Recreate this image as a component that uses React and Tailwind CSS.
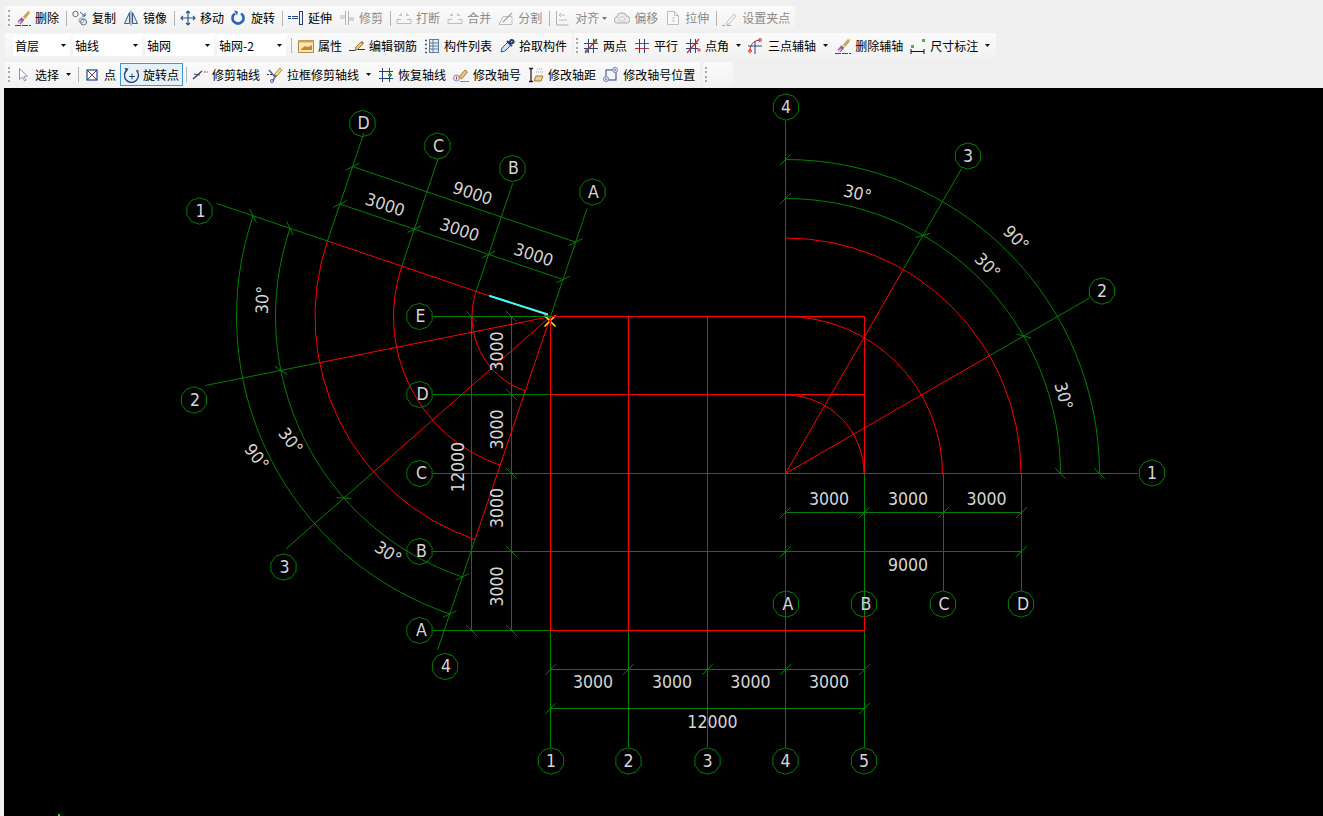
import React from "react";

const S = ({ children }) => (
  <svg width="16" height="16" viewBox="0 0 16 16" fill="none" className="shrink-0">
    {children}
  </svg>
);

// toolbar icons, drawn by hand
const BrushIcon = () => (
  <S>
    <path d="M0 15.500h16" stroke="#3b4a6b" strokeDasharray="6 1" />
    <path d="M9 8l5-6" stroke="#c9a94f" strokeWidth="3" />
    <path d="M14 2l1-1" stroke="#e8d9a0" strokeWidth="2" />
    <path d="M8 8.500l-4 4.500" stroke="#a05a9c" strokeWidth="4" />
    <path d="M3 14l3-3" stroke="#e9c6dd" strokeWidth="1.500" />
  </S>
);
const CopyIcon = () => (
  <S>
    <circle cx="3.500" cy="4" r="2.700" stroke="#5c6a80" />
    <circle cx="11.500" cy="12" r="3" stroke="#5c6a80" />
    <circle cx="9.500" cy="10.500" r="2.500" stroke="#8a97a8" />
    <path d="M8 2l5 4M13 3v3h-3" stroke="#2f5e9e" />
  </S>
);
const MirrorIcon = () => (
  <S>
    <path d="M6.500 2.500v11h-5zM9.500 2.500v11h5z" stroke="#3a5a9a" fill="#e4ebf6" />
    <path d="M8 .5v15" stroke="#6b7d99" />
  </S>
);
const MoveIcon = () => (
  <S>
    <path d="M8 1v14M1 8h14M6 3l2-2 2 2M6 13l2 2 2-2M3 6L1 8l2 2M13 6l2 2-2 2" stroke="#2f5a8f" strokeWidth="1.200" />
  </S>
);
const RotateIcon = () => (
  <S>
    <path d="M4 3.500a5.500 5.500 0 1 0 6 0" stroke="#2c62b8" strokeWidth="2.600" />
    <path d="M3 .5l4 1-1 4z" fill="#2c62b8" />
  </S>
);
const ExtendIcon = () => (
  <S>
    <rect x="11.500" y="1.500" width="3" height="13" stroke="#24407a" />
    <path d="M0 6.500h3M0 8.500h3M4 6.500h6M4 8.500h6" stroke="#24407a" />
  </S>
);
const TrimGrayIcon = () => (
  <S>
    <path d="M6.500 1v14M9.500 1v14M1 8h5M10 8h5M1 6h5M10 10h5" stroke="#b4b4b4" />
  </S>
);
const BreakIcon = () => (
  <S>
    <path d="M1 13.500h14M1 9.500h4M11 9.500h4M1 9.500v4M15 9.500v4" stroke="#bdbdbd" />
    <path d="M3 5.500h3M10 5.500h3M5 3v3M11 3v3" stroke="#bdbdbd" />
  </S>
);
const SplitIcon = () => (
  <S>
    <path d="M1 14.500h13M1 14.500l4-8h9v8" stroke="#bdbdbd" />
    <path d="M5 12L14 3" stroke="#a8a8a8" strokeWidth="1.500" />
  </S>
);
const AlignIcon = () => (
  <S>
    <path d="M1.500 1v14h12" stroke="#b0b0b0" />
    <path d="M4 5h6M4 5l2-2M4 5l2 2M4 10h8" stroke="#c0c0c0" />
  </S>
);
const OffsetIcon = () => (
  <S>
    <path d="M4 13a3 3 0 0 1-1-6 5 5 0 0 1 9.500-1A3.500 3.500 0 0 1 12 13z" stroke="#c0c0c0" strokeWidth="1.400" fill="#ededed" />
    <path d="M5.500 11a2 2 0 0 1 0-3 3 3 0 0 1 5 0 2 2 0 0 1 0 3z" stroke="#c8c8c8" />
  </S>
);
const StretchIcon = () => (
  <S>
    <path d="M2.500 1.500h7l4 4v9h-11z" stroke="#bdbdbd" fill="#f8f8f8" />
    <path d="M9.500 1.500v4h4M7 8h3M7 11h3" stroke="#bdbdbd" />
  </S>
);
const GripSetIcon = () => (
  <S>
    <path d="M0 15.500h3M5 15.500h4" stroke="#a8a8a8" />
    <path d="M5 12l7-8 2 2-7 8-3 1z" stroke="#c4c4c4" fill="#f4f4f4" />
  </S>
);
const AttrIcon = () => (
  <S>
    <path d="M.5 2.500h15v12H.5z" stroke="#b08a48" fill="#fbe8b8" />
    <path d="M.5 2.500h15v2H.5z" fill="#d9a550" />
    <path d="M3 11l4-3 3 1 4-2v5H3z" fill="#c08a3a" />
  </S>
);
const RebarIcon = () => (
  <S>
    <path d="M0 12.500h5l3-1h8" stroke="#333" />
    <path d="M6 10l6-6 2 2-6 6z" stroke="#a67c3a" fill="#e7c77c" />
    <path d="M12 4l1-1 2 2-1 1z" fill="#d9534f" />
  </S>
);
const ListIcon = () => (
  <S>
    <path d="M1 2.500h2M1 6.500h2M1 10.500h2M1 14.500h2" stroke="#3d5a80" strokeWidth="1.600" />
    <rect x="5.500" y="1.500" width="9" height="13" stroke="#5c7ba3" fill="#e8eef6" />
    <path d="M5.500 5h9M5.500 8h9M5.500 11h9M9 1.500v13" stroke="#5c7ba3" />
  </S>
);
const PickIcon = () => (
  <S>
    <path d="M2 14l1-4 6-6 3 3-6 6z" stroke="#2a5ea8" fill="#d4e4f8" />
    <path d="M8 3l5 5M10 5l2-3a2 2 0 0 1 2.500 2.500L11 6" stroke="#1f3f7a" strokeWidth="2" />
  </S>
);
const TwoPointIcon = () => (
  <S>
    <path d="M1 5.500h14M1 10.500h14M5.500 1v14M10.500 1v14" stroke="#2d4585" />
    <path d="M2 15L14 1" stroke="#d02a28" strokeWidth="1.200" />
    <circle cx="3.500" cy="13" r="1.700" fill="#4f8a34" />
    <circle cx="12.500" cy="3" r="1.700" fill="#4f8a34" />
  </S>
);
const ParallelIcon = () => (
  <S>
    <path d="M1 5.500h14M1 10.500h14" stroke="#c8322f" />
    <path d="M5.500 1v14M10.500 1v14" stroke="#2d4585" />
  </S>
);
const AngleIcon = () => (
  <S>
    <path d="M1 5.500h12M1 10.500h12M5.500 1v14M10.500 1v14" stroke="#2d4585" />
    <path d="M2 15L14 1" stroke="#d02a28" strokeWidth="1.200" />
    <circle cx="14" cy="12" r="1.200" stroke="#c8322f" />
  </S>
);
const ThreePointIcon = () => (
  <S>
    <path d="M2 13a10 10 0 0 1 10-11" stroke="#c8322f" />
    <path d="M0 8h14M7 3v13" stroke="#2d4585" />
    <circle cx="2" cy="13" r="1.400" stroke="#c8322f" />
    <circle cx="12" cy="2" r="1.400" stroke="#c8322f" />
  </S>
);
const DimIcon = () => (
  <S>
    <path d="M1 11v5M14 11v5M1 13.500h13" stroke="#111" />
    <rect x="1" y="7" width="3" height="3" fill="#4db34d" />
    <rect x="12" y="1" width="3" height="3" fill="#4db34d" />
  </S>
);
const SelectIcon = () => (
  <S>
    <path d="M4.500 1.500v11l3-2.500 2 4 1.500-.8-2-4h3.500z" stroke="#8796b4" fill="#fff" />
  </S>
);
const PointIcon = () => (
  <S>
    <rect x="3" y="3" width="10" height="10" stroke="#27407e" strokeWidth="1.200" fill="#fff" />
    <path d="M3 3l10 10M13 3L3 13" stroke="#27407e" />
    <rect x="7" y="7" width="2" height="2" fill="#e02020" />
  </S>
);
const RotatePointIcon = () => (
  <S>
    <path d="M12.500 3.500A7 7 0 1 1 3 3" stroke="#27407e" strokeWidth="1.400" />
    <path d="M.5 1l4 .5L2.500 5z" fill="#27407e" />
    <path d="M5 9.500h6M8 6.500v6" stroke="#27407e" />
    <circle cx="13.500" cy="4" r="1.300" fill="#d9534f" />
  </S>
);
const TrimAxisIcon = () => (
  <S>
    <path d="M1 12L10 4" stroke="#27407e" strokeWidth="1.400" />
    <path d="M2 7l6 1" stroke="#444" />
    <path d="M12 5h4" stroke="#c8322f" strokeDasharray="2 1" />
  </S>
);
const BoxTrimIcon = () => (
  <S>
    <path d="M7 8l6-7 2 2-6 7z" stroke="#b08a3a" fill="#f2dc8e" />
    <path d="M2 3l6 7M9 8l-3 6" stroke="#4467b0" strokeWidth="1.500" />
    <circle cx="5" cy="14" r="1.500" stroke="#4467b0" />
    <path d="M0 7.500h6" stroke="#333" strokeDasharray="2 1" />
  </S>
);
const RestoreIcon = () => (
  <S>
    <path d="M1 4.500h14M1 11.500h14M4.500 1v14M11.500 1v14" stroke="#27407e" />
    <path d="M10 8h4M12 6v4" stroke="#2e9e3f" strokeWidth="2" />
  </S>
);
const EditNoIcon = () => (
  <S>
    <circle cx="3.500" cy="11" r="3" stroke="#6d8fc7" fill="#e2ebf8" />
    <path d="M3.500 9.500v3" stroke="#c8322f" />
    <path d="M6 10l6-7 2.500 2-6 7z" stroke="#a67c3a" fill="#e7c77c" />
    <path d="M7 14.500h9" stroke="#6d8fc7" />
  </S>
);
const EditDistIcon = () => (
  <S>
    <path d="M1 1.500h4M1 14.500h4M3 1.500v13" stroke="#222" strokeWidth="1.300" />
    <path d="M6 14l2-5h7l-2 5z" stroke="#a67c3a" fill="#ecd28a" />
    <path d="M9 2h6M8 5h7" stroke="#999" strokeDasharray="1 1" />
  </S>
);
const EditPosIcon = () => (
  <S>
    <rect x="3" y="3" width="10" height="10" stroke="#27407e" />
    <circle cx="12" cy="3" r="2.500" stroke="#5f8ed1" fill="#e2ebf8" />
    <circle cx="3" cy="12" r="2.500" stroke="#5f8ed1" fill="#e2ebf8" />
    <path d="M3 11v2" stroke="#c8322f" />
    <path d="M12 2v2" stroke="#c8322f" />
  </S>
);

const GripDots = () => (
  <div className="flex h-[16px] w-[3px] flex-col justify-between">
    {[0, 1, 2, 3].map((i) => (
      <div key={i} className="h-[2px] w-[2px] bg-[#a9a9a9]" />
    ))}
  </div>
);

const Grip = () => (
  <div className="-mr-[3px]">
    <GripDots />
  </div>
);

const Sep = () => <div className="-mr-[2px] h-[15px] w-px shrink-0 bg-[#b4b4b4]" />;

const Caret = ({ gray }) => (
  <svg width="5" height="3" viewBox="0 0 5 3" className="shrink-0">
    <path d="M0 0h5L2.500 3z" fill={gray ? "#777" : "#111"} />
  </svg>
);

const Btn = ({ icon, label, gray }) => (
  <div className={`flex shrink-0 items-center gap-[4px] ${gray ? "text-[#8b8b8b]" : "text-black"}`}>
    {icon}
    <span>{label}</span>
  </div>
);

const Combo = ({ label, w }) => (
  <div className={`flex h-[21px] items-center justify-between bg-white pl-[2px] pr-[4px] ${w}`}>
    <span>{label}</span>
    <Caret />
  </div>
);

const barClass =
  "flex items-center gap-[7px] rounded-[2px] bg-gradient-to-b from-[#fbfbfb] to-[#f2f2f2]";

const Toolbar = () => (
  <div className="flex h-[88px] flex-col pl-[5px] pt-[6px] font-['Noto_Sans_CJK_SC','Liberation_Sans',sans-serif] text-[12px] leading-none">
    {/* row 1 */}
    <div className="flex h-[24px]">
      <div className={`${barClass} pl-[3px] pr-[5px]`}>
        <Grip />
        <Btn icon={<BrushIcon />} label="删除" />
        <Sep />
        <Btn icon={<CopyIcon />} label="复制" />
        <Btn icon={<MirrorIcon />} label="镜像" />
        <Sep />
        <Btn icon={<MoveIcon />} label="移动" />
        <Btn icon={<RotateIcon />} label="旋转" />
        <Sep />
        <Btn icon={<ExtendIcon />} label="延伸" />
        <Btn icon={<TrimGrayIcon />} label="修剪" gray />
        <Sep />
        <Btn icon={<BreakIcon />} label="打断" gray />
        <Btn icon={<BreakIcon />} label="合并" gray />
        <Btn icon={<SplitIcon />} label="分割" gray />
        <Sep />
        <Btn icon={<AlignIcon />} label="对齐" gray />
        <div className="-ml-[4px]">
          <Caret gray />
        </div>
        <Btn icon={<OffsetIcon />} label="偏移" gray />
        <Btn icon={<StretchIcon />} label="拉伸" gray />
        <Sep />
        <Btn icon={<GripSetIcon />} label="设置夹点" gray />
      </div>
    </div>

    {/* row 2 */}
    <div className="mt-[3px] flex h-[25px]">
      <div className={`${barClass} pl-[8px] pr-[5px]`}>
        <div className="flex gap-[3px]">
          <Combo label="首层" w="w-[57px]" />
          <Combo label="轴线" w="w-[69px]" />
          <Combo label="轴网" w="w-[69px]" />
          <Combo label="轴网-2" w="w-[69px]" />
        </div>
        <div className="-ml-[2px]">
          <Sep />
        </div>
        <Btn icon={<AttrIcon />} label="属性" />
        <Btn icon={<RebarIcon />} label="编辑钢筋" />
        <Btn icon={<ListIcon />} label="构件列表" />
        <Btn icon={<PickIcon />} label="拾取构件" />
      </div>
      <div className={`${barClass} ml-[2px] pl-[2px] pr-[6px]`}>
        <Grip />
        <Btn icon={<TwoPointIcon />} label="两点" />
        <Btn icon={<ParallelIcon />} label="平行" />
        <Btn icon={<AngleIcon />} label="点角" />
        <Caret />
        <Btn icon={<ThreePointIcon />} label="三点辅轴" />
        <Caret />
        <Btn icon={<BrushIcon />} label="删除辅轴" />
        <Btn icon={<DimIcon />} label="尺寸标注" />
        <Caret />
      </div>
    </div>

    {/* row 3 */}
    <div className="mt-[4px] flex h-[25px]">
      <div className={`${barClass} pl-[3px] pr-[5px]`}>
        <Grip />
        <Btn icon={<SelectIcon />} label="选择" />
        <Caret />
        <Sep />
        <Btn icon={<PointIcon />} label="点" />
        <div className="-ml-[3px] flex h-[23px] items-center gap-[3px] border border-[#3a97dd] bg-[#e6f2fb] px-[3px]">
          <RotatePointIcon />
          <span>旋转点</span>
        </div>
        <div className="-ml-[4px] -mr-[1px]">
          <Sep />
        </div>
        <Btn icon={<TrimAxisIcon />} label="修剪轴线" />
        <Btn icon={<BoxTrimIcon />} label="拉框修剪轴线" />
        <Caret />
        <Btn icon={<RestoreIcon />} label="恢复轴线" />
        <Btn icon={<EditNoIcon />} label="修改轴号" />
        <Btn icon={<EditDistIcon />} label="修改轴距" />
        <Btn icon={<EditPosIcon />} label="修改轴号位置" />
      </div>
      <div className={`${barClass} ml-[3px] w-[30px] pl-[2px]`}>
        <GripDots />
      </div>
    </div>
  </div>
);

// ---- drawing geometry, in screenshot pixels ----
const GREEN = "#008000";
const RED = "#ff0000";
const TEXT = "#d6d6d6";
const U = 78.5;
const RADS = [U, 157, 235.5];
const DIMS = [275, 314];
const AXIS_END = 352;

const rad = (d) => (d * Math.PI) / 180;

const L = ({ a, b, c = GREEN }) => <line x1={a[0]} y1={a[1]} x2={b[0]} y2={b[1]} stroke={c} strokeWidth="1" />;

// tick mark: 45 degrees off the line it sits on
const Tick = ({ p, deg, len = 7.5 }) => {
  const t = rad(deg + 45);
  const d = [Math.cos(t) * len, Math.sin(t) * len];
  return <L a={[p[0] - d[0], p[1] - d[1]]} b={[p[0] + d[0], p[1] + d[1]]} />;
};

const Txt = ({ x, y, r = 0, children }) => (
  <text
    x={x}
    y={y}
    fill={TEXT}
    fontFamily="'DejaVu Sans', sans-serif"
    fontSize="17"
    textAnchor="middle"
    dominantBaseline="central"
    transform={`rotate(${r} ${x} ${y}) translate(${x} ${y}) scale(0.93 1) translate(${-x} ${-y})`}
  >
    {children}
  </text>
);

const Bubble = ({ x, y, label, tx = 0, ty = 0 }) => {
  const pts = Array.from({ length: 10 }, (_, i) => {
    const t = rad(i * 36 + 18);
    return `${(x + Math.cos(t) * 13.2).toFixed(1)},${(y + Math.sin(t) * 13.2).toFixed(1)}`;
  }).join(" ");
  return (
    <g>
      <polygon points={pts} stroke={GREEN} fill="none" />
      <Txt x={x + tx} y={y + ty}>
        {label}
      </Txt>
    </g>
  );
};

const RightPolar = () => {
  const c = [785.5, 473.5];
  const pt = (r, a) => [c[0] + r * Math.cos(rad(a)), c[1] - r * Math.sin(rad(a))];
  const arc = (r) => `M${c[0] + r} ${c[1]}A${r} ${r} 0 0 0 ${c[0]} ${c[1] - r}`;
  return (
    <g>
      {[0, 30, 60, 90].map((a) => (
        <g key={a}>
          <L a={c} b={pt(235.5, a)} c={RED} />
          <L a={pt(235.5, a)} b={pt(AXIS_END, a)} />
          <Tick p={pt(275, a)} deg={-a} />
        </g>
      ))}
      {RADS.map((r) => (
        <path key={r} d={arc(r)} stroke={RED} fill="none" />
      ))}
      {DIMS.map((r) => (
        <path key={r} d={arc(r)} stroke={GREEN} fill="none" />
      ))}
      <Tick p={pt(314, 0)} deg={0} />
      <Tick p={pt(314, 90)} deg={-90} />
    </g>
  );
};

const LeftPolar = () => {
  const c = [550.5, 316.5];
  const rot = 18.7;
  // angle measured from -x, downward positive; axis 1..4
  const angs = [-rot, 30 - rot, 60 - rot, 90 - rot];
  const pt = (r, a) => [c[0] - r * Math.cos(rad(a)), c[1] + r * Math.sin(rad(a))];
  const arc = (r) => {
    const s = pt(r, angs[0]);
    const e = pt(r, angs[3]);
    return `M${s[0]} ${s[1]}A${r} ${r} 0 0 0 ${e[0]} ${e[1]}`;
  };
  const v = [Math.sin(rad(rot)), -Math.cos(rad(rot))];
  const along = (s, t) => {
    const o = pt(s, angs[0]);
    return [o[0] + v[0] * t, o[1] + v[1] * t];
  };
  const axisOff = [0, U, 157, 235.5];
  return (
    <g>
      {angs.map((a) => (
        <g key={a}>
          <L a={c} b={pt(235.5, a)} c={RED} />
          <L a={pt(235.5, a)} b={pt(AXIS_END, a)} />
          <Tick p={pt(275, a)} deg={180 - a} />
        </g>
      ))}
      {RADS.map((r) => (
        <path key={r} d={arc(r)} stroke={RED} fill="none" />
      ))}
      {DIMS.map((r) => (
        <path key={r} d={arc(r)} stroke={GREEN} fill="none" />
      ))}
      <Tick p={pt(314, angs[0])} deg={180 - angs[0]} />
      <Tick p={pt(314, angs[3])} deg={180 - angs[3]} />
      {axisOff.map((s) => (
        <g key={s}>
          <L a={along(s, 0)} b={along(s, 114)} />
          <Tick p={along(s, 39)} deg={108.7} />
        </g>
      ))}
      <L a={along(235.5, 39)} b={along(0, 39)} />
      <L a={along(235.5, 78.5)} b={along(0, 78.5)} />
      <Tick p={along(235.5, 78.5)} deg={108.7} />
      <Tick p={along(0, 78.5)} deg={108.7} />
      <line x1="489.3" y1="295.7" x2="548" y2="314.5" stroke="#40ffff" strokeWidth="2" />
      <path d="M544.500 315.500l11 11M555.500 315.500l-11 11" stroke="#ffee00" strokeWidth="1.500" />
      <circle cx="550" cy="321" r="1.500" fill={RED} />
    </g>
  );
};

const Grid = () => {
  const xs = [550.5, 628.5, 707.5, 785.5, 864.5];
  const ys = [316.5, 394.5, 473.5, 551.5, 630.5];
  return (
    <g shapeRendering="crispEdges">
      {/* horizontal axis lines, green stub then red */}
      {ys.map((y) => (
        <L key={y} a={[433, y]} b={[550.5, y]} />
      ))}
      <L a={[550.5, 316.5]} b={[864.5, 316.5]} c={RED} />
      <L a={[550.5, 394.5]} b={[864.5, 394.5]} c={RED} />
      <L a={[550.5, 473.5]} b={[1021.5, 473.5]} c={RED} />
      <L a={[1021.5, 473.5]} b={[1138, 473.5]} />
      <L a={[550.5, 551.5]} b={[785.5, 551.5]} c={RED} />
      <L a={[785.5, 551.5]} b={[1021.5, 551.5]} />
      <L a={[550.5, 630.5]} b={[864.5, 630.5]} c={RED} />
      {/* vertical axis lines */}
      {xs.map((x) => (
        <L key={x} a={[x, 630.5]} b={[x, 747]} />
      ))}
      {xs.slice(0, 3).map((x) => (
        <L key={x} a={[x, 316.5]} b={[x, 630.5]} c={RED} />
      ))}
      <L a={[864.5, 316.5]} b={[864.5, 473.5]} c={RED} />
      <L a={[785.5, 473.5]} b={[785.5, 616]} />
      <L a={[785.5, 616]} b={[785.5, 630.5]} c={RED} />
      <L a={[864.5, 473.5]} b={[864.5, 616]} />
      <L a={[864.5, 616]} b={[864.5, 630.5]} c={RED} />
      <L a={[943.5, 473.5]} b={[943.5, 591]} />
      <L a={[1021.5, 473.5]} b={[1021.5, 591]} />
      {/* dimension lines */}
      <L a={[471.5, 316.5]} b={[471.5, 630.5]} />
      <L a={[511.5, 316.5]} b={[511.5, 630.5]} />
      <L a={[550.5, 669.5]} b={[864.5, 669.5]} />
      <L a={[550.5, 708.5]} b={[864.5, 708.5]} />
      <L a={[785.5, 512.5]} b={[1021.5, 512.5]} />
    </g>
  );
};

const GridTicks = () => {
  const xs = [550.5, 628.5, 707.5, 785.5, 864.5];
  return (
    <g>
      {[316.5, 394.5, 473.5, 551.5, 630.5].map((y) => (
        <Tick key={y} p={[511.5, y]} deg={0} />
      ))}
      <Tick p={[471.5, 316.5]} deg={0} />
      <Tick p={[471.5, 630.5]} deg={0} />
      {xs.map((x) => (
        <Tick key={x} p={[x, 669.5]} deg={-90} />
      ))}
      <Tick p={[550.5, 708.5]} deg={-90} />
      <Tick p={[864.5, 708.5]} deg={-90} />
      {[785.5, 864.5, 943.5, 1021.5].map((x) => (
        <Tick key={x} p={[x, 512.5]} deg={-90} />
      ))}
      <Tick p={[785.5, 551.5]} deg={-90} />
      <Tick p={[1021.5, 551.5]} deg={-90} />
    </g>
  );
};

const bubbles = [
  // right plan
  [786, 107, "4"], [968, 156, "3"], [1102, 291, "2"], [1152, 473, "1"],
  [786, 604, "A", 2], [864, 604, "B", 2], [943, 604, "C", 1], [1021, 604, "D", 2],
  // bottom
  [551, 761, "1"], [628.5, 761, "2"], [707.5, 761, "3"], [785.5, 761, "4"], [864, 761, "5"],
  // left
  [419.5, 316.5, "E", 1], [419.5, 394.5, "D", 3], [419.5, 473.5, "C", 2], [419.5, 551.5, "B", 2], [419.5, 630.5, "A", 2],
  // rotated
  [362.5, 123.5, "D", 1], [437.5, 146, "C", 1], [512.5, 168.5, "B", 1], [592.5, 192, "A", 1],
  [199.5, 211, "1", 1], [194, 400, "2", 1], [283.5, 567, "3", 1], [445, 666.5, "4", 1],
];

const labels = [
  [593, 682.5, 0, "3000"], [672, 682.5, 0, "3000"], [750.5, 682.5, 0, "3000"], [829, 682.5, 0, "3000"],
  [712.5, 722, 0, "12000"],
  [829, 499, 0, "3000"], [908, 499, 0, "3000"], [986.5, 499, 0, "3000"], [908, 565, 0, "9000"],
  [497.5, 351.5, -90, "3000"], [497.5, 429.5, -90, "3000"], [497.5, 508, -90, "3000"], [497.5, 586.5, -90, "3000"],
  [458, 467, -90, "12000"],
  [472.5, 193.5, 18.7, "9000"], [385, 205, 18.7, "3000"], [459.5, 230, 18.7, "3000"], [533.5, 255, 18.7, "3000"],
  [262.5, 300, -88, "30°"], [290.5, 441, 52, "30°"], [256.5, 457, 52, "90°"], [388, 553, 33, "30°"],
  [857.5, 193.5, 13, "30°"], [1016, 238.5, 45, "90°"], [987.5, 266, 45, "30°"], [1063.5, 396, 75, "30°"],
];

const App = () => (
  <div className="flex h-[816px] w-[1323px] flex-col overflow-hidden bg-[#f0f0f0]">
    <Toolbar />
    <div className="ml-[4px] h-[728px] bg-black">
      <svg width="1319" height="728" viewBox="4 88 1319 728" className="block">
        <RightPolar />
        <LeftPolar />
        <Grid />
        <GridTicks />
        {bubbles.map(([x, y, t, tx]) => (
          <Bubble key={`${x}-${y}`} x={x} y={y} label={t} tx={tx} />
        ))}
        {labels.map(([x, y, r, t]) => (
          <Txt key={`${x}-${y}`} x={x} y={y} r={r}>
            {t}
          </Txt>
        ))}
        <rect x="58" y="814" width="2" height="2" fill="#00ff00" />
      </svg>
    </div>
  </div>
);

export default App;
